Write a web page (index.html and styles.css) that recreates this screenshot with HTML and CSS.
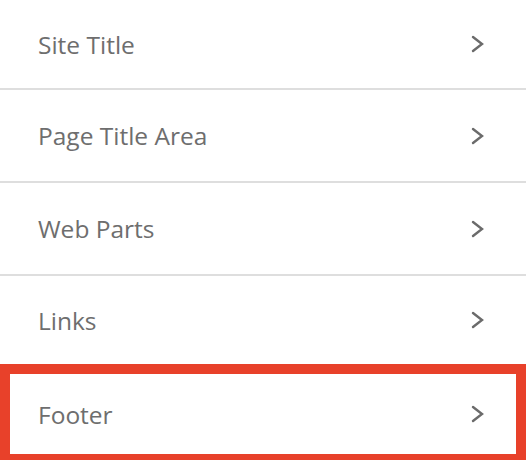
FILE: index.html
```html
<!DOCTYPE html>
<html>
<head>
<meta charset="utf-8">
<link rel="stylesheet" href="styles.css">
</head>
<body>
<div class="menu">
  <div class="row first"><span class="label">Site Title</span><svg class="chev" viewBox="0 0 14 18" width="14" height="18"><path d="M2 2 L11 9 L2 16" fill="none" stroke="#6b6b6b" stroke-width="2.4" stroke-linecap="round" stroke-linejoin="miter"/></svg></div>
  <div class="row"><span class="label">Page Title Area</span><svg class="chev" viewBox="0 0 14 18" width="14" height="18"><path d="M2 2 L11 9 L2 16" fill="none" stroke="#6b6b6b" stroke-width="2.4" stroke-linecap="round" stroke-linejoin="miter"/></svg></div>
  <div class="row"><span class="label">Web Parts</span><svg class="chev" viewBox="0 0 14 18" width="14" height="18"><path d="M2 2 L11 9 L2 16" fill="none" stroke="#6b6b6b" stroke-width="2.4" stroke-linecap="round" stroke-linejoin="miter"/></svg></div>
  <div class="row links"><span class="label">Links</span><svg class="chev" viewBox="0 0 14 18" width="14" height="18"><path d="M2 2 L11 9 L2 16" fill="none" stroke="#6b6b6b" stroke-width="2.4" stroke-linecap="round" stroke-linejoin="miter"/></svg></div>
  <div class="row footer"><span class="label">Footer</span><svg class="chev" viewBox="0 0 14 18" width="14" height="18"><path d="M2 2 L11 9 L2 16" fill="none" stroke="#6b6b6b" stroke-width="2.4" stroke-linecap="round" stroke-linejoin="miter"/></svg></div>
</div>
</body>
</html>
```
FILE: styles.css
```css
html, body {
  margin: 0;
  padding: 0;
  background: #ffffff;
  overflow: hidden;
}
.menu {
  width: 526px;
  display: flex;
  flex-direction: column;
  font-family: "Open Sans", "Noto Sans", sans-serif;
}
.row {
  box-sizing: border-box;
  display: flex;
  align-items: center;
  justify-content: space-between;
  padding: 0 41px 0 38px;
  border-bottom: 2px solid #dedede;
  height: 93px;
}
.row.first {
  height: 90px;
}
.row.links {
  height: 88px;
  border-bottom: none;
}
.label {
  font-size: 24.5px;
  color: #6e6e6e;
}
.chev {
  display: block;
}
.row.footer {
  height: 100px;
  border: 10px solid #e8412a;
  padding: 0 31px 0 28px;
}
```
